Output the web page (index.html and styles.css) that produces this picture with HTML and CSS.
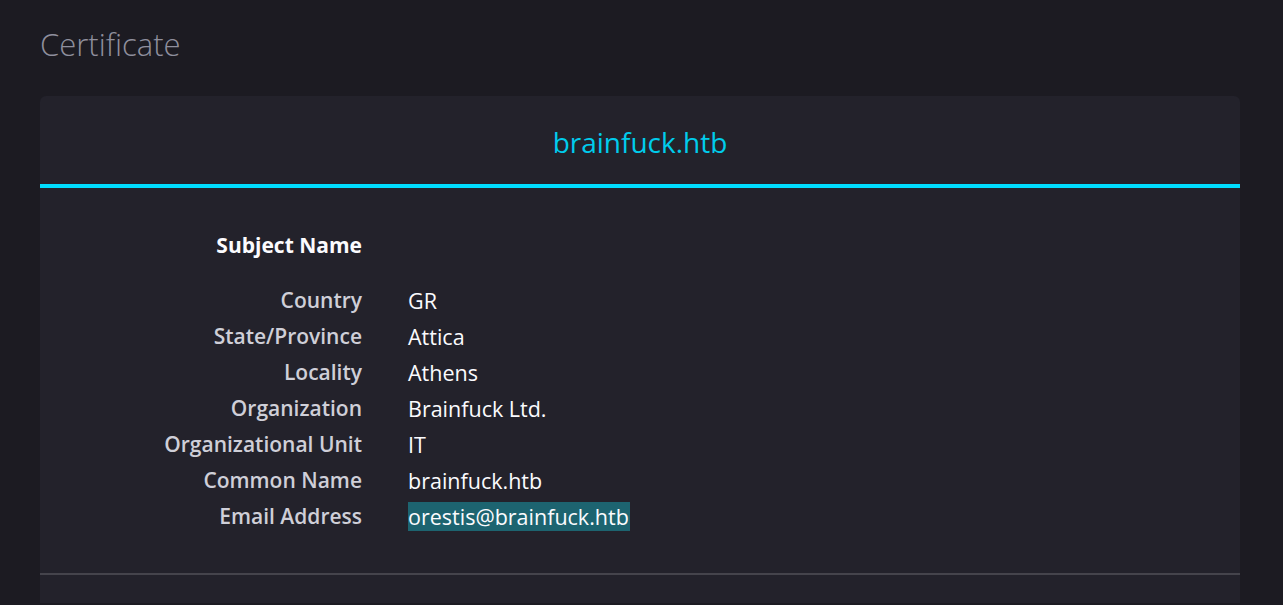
FILE: index.html
```html
<!DOCTYPE html>
<html>
<head>
<meta charset="utf-8">
<link rel="stylesheet" href="styles.css">
</head>
<body>
<h1 class="page-title">Certificate</h1>
<section class="card">
  <header class="card-header"><span class="tab-title">brainfuck.htb</span></header>
  <div class="card-body">
    <div class="info-group">
      <div class="group-title">Subject Name</div>
      <div></div>
    </div>
    <div class="info-rows">
      <div class="label">Country</div><div class="value">GR</div>
      <div class="label">State/Province</div><div class="value">Attica</div>
      <div class="label">Locality</div><div class="value">Athens</div>
      <div class="label">Organization</div><div class="value">Brainfuck Ltd.</div>
      <div class="label">Organizational Unit</div><div class="value">IT</div>
      <div class="label">Common Name</div><div class="value">brainfuck.htb</div>
      <div class="label">Email Address</div><div class="value"><span class="selected">orestis@brainfuck.htb</span></div>
    </div>
  </div>
  <div class="divider"></div>
  <div class="card-rest"></div>
</section>
</body>
</html>
```
FILE: styles.css
```css
html, body {
  margin: 0;
  padding: 0;
  background: #1c1b22;
  height: 100%;
  overflow: hidden;
}
body {
  font-family: "Open Sans", "Noto Sans", sans-serif;
  padding: 0 43px 0 40px;
}
.page-title {
  margin: 0;
  padding-top: 24px;
  height: 96px;
  box-sizing: border-box;
  font-size: 31px;
  font-weight: 300;
  color: #8f8f9d;
  line-height: 40px;
}
.card {
  background: #23222b;
  border-radius: 6px 6px 0 0;
}
.card-header {
  height: 88px;
  display: flex;
  align-items: center;
  justify-content: center;
  border-bottom: 4px solid #00ddff;
}
.tab-title {
  color: #00ccec;
  font-size: 28px;
  padding-top: 4px;
}
.card-body {
  padding: 39px 0 39px;
}
.info-group {
  display: grid;
  grid-template-columns: 322px 1fr;
  height: 55px;
}
.group-title {
  text-align: right;
  color: #fbfbfe;
  font-weight: 700;
  font-size: 21px;
  line-height: 36px;
}
.info-rows {
  display: grid;
  grid-template-columns: 322px 1fr;
  column-gap: 46px;
  grid-auto-rows: 36px;
  align-items: center;
}
.label {
  text-align: right;
  color: #cfcfd8;
  font-weight: 600;
  font-size: 21px;
}
.value {
  color: #fbfbfe;
  font-size: 21.5px;
}
.selected {
  background: #1d6470;
  padding: 0 1px 0 0;
}
.divider {
  height: 2px;
  background: #45444c;
}
.card-rest {
  height: 28px;
}
```
